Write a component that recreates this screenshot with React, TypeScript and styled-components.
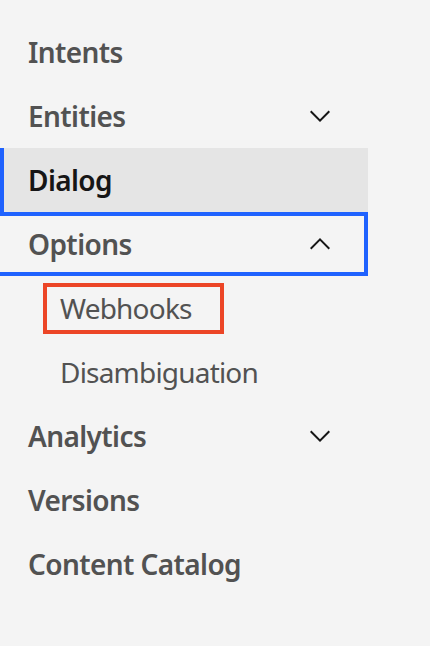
import React from "react";
import styled, { createGlobalStyle, css } from "styled-components";

const GlobalStyle = createGlobalStyle`
  html, body {
    margin: 0;
    padding: 0;
    background: #f4f4f4;
  }
  body {
    font-family: "Noto Sans", "Open Sans", sans-serif;
  }
`;

const Page = styled.div`
  width: 430px;
  height: 646px;
  background: #f4f4f4;
  overflow: hidden;
`;

const Nav = styled.nav`
  width: 368px;
  padding-top: 20px;
  display: flex;
  flex-direction: column;
`;

const Item = styled.a<{ $active?: boolean; $focused?: boolean; $sub?: boolean }>`
  box-sizing: border-box;
  height: 64px;
  display: flex;
  align-items: center;
  justify-content: space-between;
  padding: 0 32px 0 28px;
  font-size: 28px;
  font-weight: 600;
  letter-spacing: -0.6px;
  color: #525252;
  text-decoration: none;
  ${(p) =>
    p.$sub &&
    css`
      padding-left: 60px;
      font-weight: 400;
      letter-spacing: -0.8px;
    `}
  ${(p) =>
    p.$active &&
    css`
      background: #e5e5e5;
      border-left: 4px solid #1f62fe;
      padding-left: 24px;
      color: #161616;
    `}
  ${(p) =>
    p.$focused &&
    css`
      border-top: 4px solid #1f62fe;
      border-right: 4px solid #1f62fe;
      border-bottom: 4px solid #1f62fe;
      padding-right: 28px;
    `}
`;

const Annotated = styled.span`
  box-sizing: border-box;
  display: inline-flex;
  align-items: center;
  height: 51px;
  margin-left: -17px;
  padding: 0 28px 0 13px;
  border: 4px solid #ec4526;
`;

const Label = styled.span`
  white-space: nowrap;
`;

const Icon = styled.svg`
  width: 32px;
  height: 32px;
  flex: none;
  fill: #161616;
`;

const ChevronDown = () => (
  <Icon viewBox="0 0 16 16">
    <path d="M8 11L3 6 3.7 5.3 8 9.6 12.3 5.3 13 6z" />
  </Icon>
);

const ChevronUp = () => (
  <Icon viewBox="0 0 16 16">
    <path d="M8 5L13 10 12.3 10.7 8 6.4 3.7 10.7 3 10z" />
  </Icon>
);

export default function App() {
  return (
    <Page>
      <GlobalStyle />
      <Nav>
        <Item>
          <Label>Intents</Label>
        </Item>
        <Item>
          <Label>Entities</Label>
          <ChevronDown />
        </Item>
        <Item $active>
          <Label>Dialog</Label>
        </Item>
        <Item $focused>
          <Label>Options</Label>
          <ChevronUp />
        </Item>
        <Item $sub>
          <Annotated>
            <Label>Webhooks</Label>
          </Annotated>
        </Item>
        <Item $sub>
          <Label>Disambiguation</Label>
        </Item>
        <Item>
          <Label>Analytics</Label>
          <ChevronDown />
        </Item>
        <Item>
          <Label>Versions</Label>
        </Item>
        <Item>
          <Label>Content Catalog</Label>
        </Item>
      </Nav>
    </Page>
  );
}
